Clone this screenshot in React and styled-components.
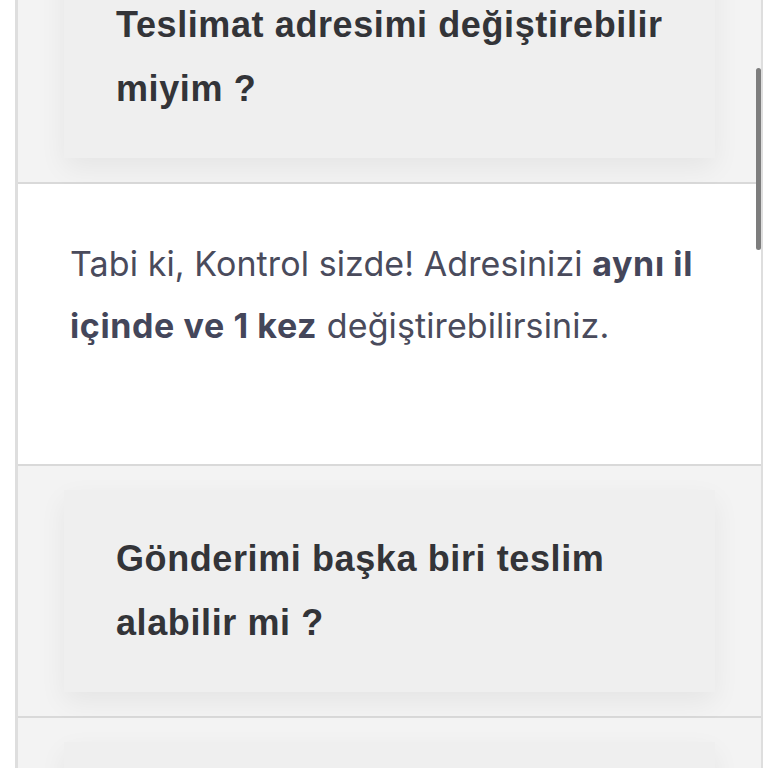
import React from "react";
import styled, { createGlobalStyle } from "styled-components";

const GlobalStyle = createGlobalStyle`
  html, body {
    margin: 0;
    padding: 0;
    background: #ffffff;
    overflow: hidden;
  }
  body {
    font-family: Inter, "Noto Sans", sans-serif;
  }
`;

const Page = styled.div`
  position: relative;
  height: 768px;
  overflow: hidden;
  padding: 0 5px 0 15px;
`;

const List = styled.div`
  margin-top: -68px;
  border-left: 3px solid #dedede;
  border-right: 2px solid #dedede;
`;

const Question = styled.div`
  background: #f3f3f3;
  padding: 24px 46px;
  border-bottom: 2px solid #d9d9d9;
`;

const QuestionCard = styled.div`
  background: #efefef;
  padding: 37px 48px 37px 52px;
  box-shadow: 0 10px 26px rgba(0, 0, 0, 0.06);
  min-height: 128px;
`;

const QuestionText = styled.h3`
  margin: 0;
  font-family: "Liberation Sans", Arial, sans-serif;
  font-size: 36px;
  line-height: 64px;
  font-weight: 700;
  letter-spacing: 0.6px;
  color: #333438;
`;

const Answer = styled.div`
  background: #ffffff;
  padding: 49px 40px 107px 52px;
  border-bottom: 2px solid #d9d9d9;
`;

const AnswerText = styled.p`
  margin: 0;
  font-family: Inter, "Noto Sans", sans-serif;
  font-size: 34px;
  line-height: 62px;
  letter-spacing: 0.1px;
  color: #4a4b5c;

  b {
    font-weight: 700;
    letter-spacing: 0.6px;
    color: #44465a;
  }
`;

const Thumb = styled.div`
  position: absolute;
  top: 68px;
  right: 7px;
  width: 5px;
  height: 182px;
  border-radius: 3px;
  background: #7d7d7d;
`;

const faqs = [
  {
    q: "Teslimat adresimi değiştirebilir miyim ?",
    a: (
      <>
        Tabi ki, Kontrol sizde! Adresinizi <b>aynı il içinde ve 1 kez</b>{" "}
        değiştirebilirsiniz.
      </>
    ),
  },
  { q: "Gönderimi başka biri teslim alabilir mi ?" },
  { q: "Kargom ne zaman teslim edilir ?" },
];

export default function App() {
  return (
    <>
      <GlobalStyle />
      <Page>
        <List>
          {faqs.map((item, i) => (
            <React.Fragment key={i}>
              <Question>
                <QuestionCard>
                  <QuestionText>{item.q}</QuestionText>
                </QuestionCard>
              </Question>
              {item.a && (
                <Answer>
                  <AnswerText>{item.a}</AnswerText>
                </Answer>
              )}
            </React.Fragment>
          ))}
        </List>
        <Thumb />
      </Page>
    </>
  );
}
